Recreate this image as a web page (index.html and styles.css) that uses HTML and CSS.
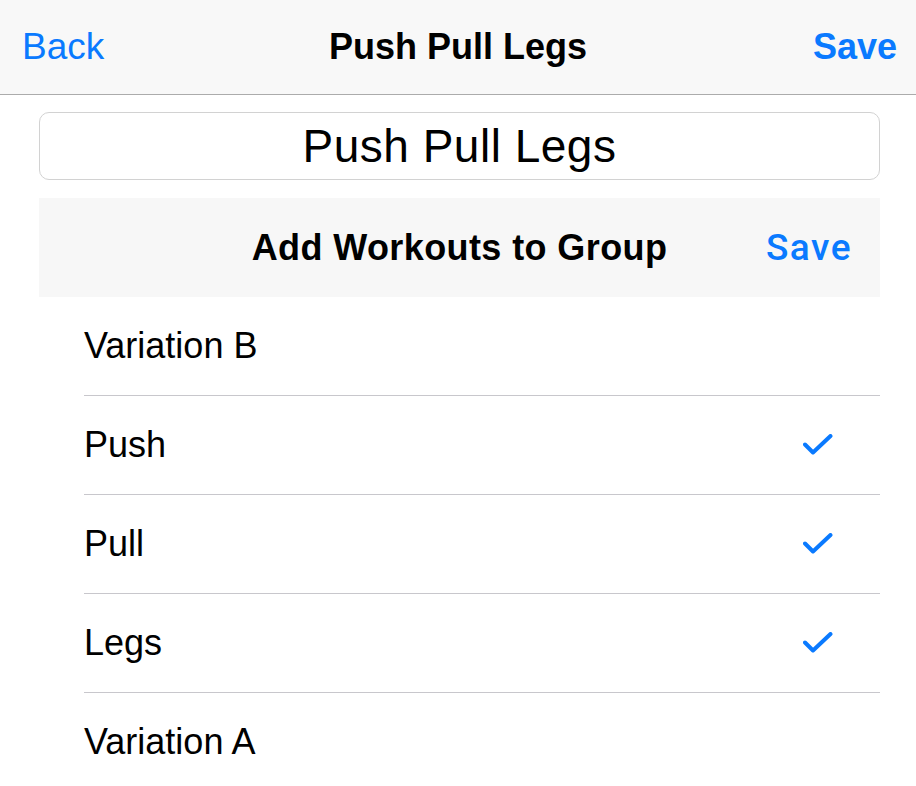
FILE: index.html
```html
<!DOCTYPE html>
<html>
<head>
<meta charset="utf-8">
<link rel="stylesheet" href="styles.css">
</head>
<body>
<header class="nav">
  <span class="nav-back">Back</span>
  <span class="nav-title">Push Pull Legs</span>
  <span class="nav-save">Save</span>
</header>
<main class="content">
  <div class="name-field">Push Pull Legs</div>
  <div class="section-head">
    <span class="section-title">Add Workouts to Group</span>
    <span class="section-save">Save</span>
  </div>
  <ul class="list">
    <li class="row"><span class="row-label">Variation B</span></li>
    <li class="row"><span class="row-label">Push</span>
      <svg class="check" viewBox="0 0 30 24" width="30" height="24"><path d="M2 10.5 L10 18.5 L27.5 2" fill="none" stroke="#0a7aff" stroke-width="4" stroke-linecap="round" stroke-linejoin="round"/></svg></li>
    <li class="row"><span class="row-label">Pull</span>
      <svg class="check" viewBox="0 0 30 24" width="30" height="24"><path d="M2 10.5 L10 18.5 L27.5 2" fill="none" stroke="#0a7aff" stroke-width="4" stroke-linecap="round" stroke-linejoin="round"/></svg></li>
    <li class="row"><span class="row-label">Legs</span>
      <svg class="check" viewBox="0 0 30 24" width="30" height="24"><path d="M2 10.5 L10 18.5 L27.5 2" fill="none" stroke="#0a7aff" stroke-width="4" stroke-linecap="round" stroke-linejoin="round"/></svg></li>
    <li class="row"><span class="row-label">Variation A</span></li>
  </ul>
</main>
</body>
</html>
```
FILE: styles.css
```css
html, body {
  margin: 0;
  padding: 0;
  background: #ffffff;
  font-family: "Liberation Sans", Arial, sans-serif;
  color: #000;
}

.nav {
  height: 94px;
  background: #f8f8f8;
  border-bottom: 1px solid #ababab;
  display: flex;
  align-items: center;
  justify-content: space-between;
  padding: 0 19px 0 22px;
  position: relative;
}

.nav-back {
  color: #0a7aff;
  font-size: 37px;
}

.nav-title {
  font-size: 36px;
  font-weight: 700;
  position: absolute;
  left: 0;
  right: 0;
  text-align: center;
  pointer-events: none;
}

.nav-save {
  color: #0a7aff;
  font-size: 36px;
  font-weight: 700;
}

.content {
  padding: 17px 36px 0 39px;
}

.name-field {
  height: 66px;
  border: 1px solid #d2d2d2;
  border-radius: 10px;
  display: flex;
  align-items: center;
  justify-content: center;
  font-size: 46px;
  letter-spacing: 0.5px;
}

.section-head {
  margin-top: 18px;
  height: 99px;
  background: #f7f7f7;
  display: flex;
  align-items: center;
  justify-content: center;
  position: relative;
}

.section-title {
  font-size: 36px;
  font-weight: 700;
  letter-spacing: 0.4px;
}

.section-save {
  position: absolute;
  right: 28px;
  color: #0a7aff;
  font-family: Roboto, "Liberation Sans", sans-serif;
  font-weight: 500;
  font-size: 37px;
  letter-spacing: 1.5px;
}

.list {
  list-style: none;
  margin: 0;
  padding: 0 0 0 45px;
}

.row {
  height: 98px;
  border-bottom: 1px solid #c8c7cc;
  display: flex;
  align-items: center;
  justify-content: space-between;
  padding-right: 47px;
}

.row:last-child {
  border-bottom: none;
}

.row-label {
  font-size: 36px;
}

.check {
  display: block;
  margin-top: 1px;
}
```
